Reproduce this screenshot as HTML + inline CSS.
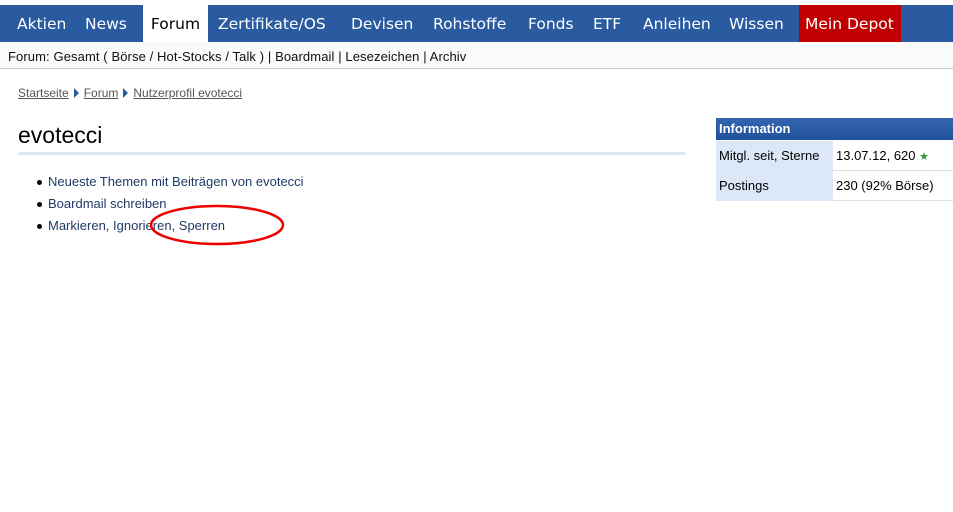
<!DOCTYPE html>
<html><head><meta charset="utf-8"><style>
body{margin:0;width:953px;height:512px;background:#fff;font-family:"Liberation Sans",sans-serif;position:relative;overflow:hidden}
.a{position:absolute;white-space:nowrap}
#nav{position:absolute;left:0;top:5px;width:953px;height:37px;background:#2a5ba0}
.n{position:absolute;top:5px;height:37px;line-height:38px;color:#fff;font-family:"DejaVu Sans",sans-serif;font-size:15.5px}
#sub{position:absolute;left:0;top:42px;width:953px;height:26px;background:#fafafa;border-bottom:1px solid #ccc}
.bc{color:#555;font-size:12px;text-decoration:underline}
.tri{display:inline-block;width:0;height:0;border-left:5px solid #2a5ba0;border-top:5px solid transparent;border-bottom:5px solid transparent;margin:0 5px;vertical-align:-1px}
.li{font-size:13px;color:#1f3a66}
.dot{position:absolute;width:5px;height:5px;border-radius:50%;background:#000}
td{font-size:13px;color:#000;padding:0 3px;height:29px}
</style></head><body>
<div id="nav"></div>
<div class="a n" style="left:17px">Aktien</div>
<div class="a n" style="left:85px">News</div>
<div class="a n" style="left:143px;width:65px;background:#fff;color:#000;text-align:center">Forum</div>
<div class="a n" style="left:218px">Zertifikate/OS</div>
<div class="a n" style="left:351px">Devisen</div>
<div class="a n" style="left:433px">Rohstoffe</div>
<div class="a n" style="left:528px">Fonds</div>
<div class="a n" style="left:593px">ETF</div>
<div class="a n" style="left:643px">Anleihen</div>
<div class="a n" style="left:729px">Wissen</div>
<div class="a n" style="left:799px;width:102px;background:#c00000;padding-left:6px;box-sizing:border-box">Mein Depot</div>
<div id="sub"></div>
<div class="a" style="left:8px;top:49px;font-size:13px;color:#111;letter-spacing:0.1px">Forum: Gesamt ( Börse / Hot-Stocks / Talk ) | Boardmail | Lesezeichen | Archiv</div>
<div class="a" style="left:18px;top:84px"><span class="bc">Startseite</span><span class="tri"></span><span class="bc">Forum</span><span class="tri"></span><span class="bc">Nutzerprofil evotecci</span></div>
<div class="a" style="left:18px;top:122px;font-size:23px;color:#000">evotecci</div>
<div class="a" style="left:18px;top:152px;width:667px;height:3px;background:#dce6f4"></div>
<div class="dot" style="left:37px;top:180px"></div><div class="a li" style="left:48px;top:174px">Neueste Themen mit Beiträgen von evotecci</div>
<div class="dot" style="left:37px;top:202px"></div><div class="a li" style="left:48px;top:196px">Boardmail schreiben</div>
<div class="dot" style="left:37px;top:224px"></div><div class="a li" style="left:48px;top:218px">Markieren, Ignorieren, Sperren</div>
<svg class="a" style="left:150px;top:200px" width="140" height="50"><ellipse cx="67" cy="25" rx="66" ry="19" fill="none" stroke="#e00" stroke-width="2.5"/></svg>
<div class="a" style="left:716px;top:118px;width:237px;height:22px;background:linear-gradient(#3565b0,#21519a);color:#fff;font-weight:bold;font-size:13px;line-height:22px;padding-left:3px;box-sizing:border-box">Information</div>
<table class="a" style="left:716px;top:141px;border-collapse:collapse;width:237px">
<tr><td style="background:#dce8f8;width:111px">Mitgl. seit, Sterne</td><td style="border-bottom:1px solid #ddd">13.07.12, 620 <span style="color:#2a9a3a;font-size:11px">★</span></td></tr>
<tr><td style="background:#dce8f8">Postings</td><td style="border-bottom:1px solid #ddd">230 (92% Börse)</td></tr>
</table>
</body></html>
